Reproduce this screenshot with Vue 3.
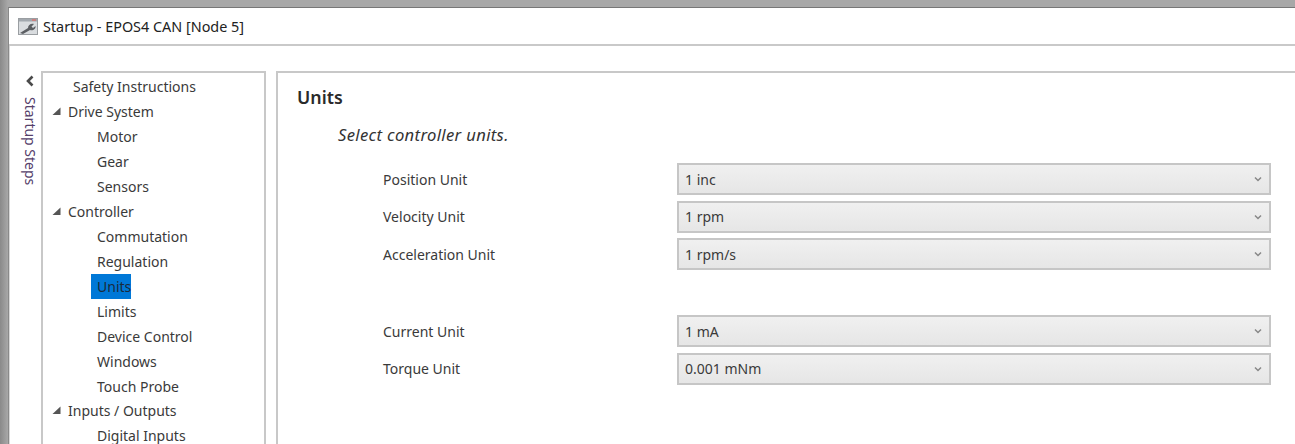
<script setup>
const tree = [
  { label: 'Safety Instructions', level: 0 },
  { label: 'Drive System', level: 1, open: true },
  { label: 'Motor', level: 2 },
  { label: 'Gear', level: 2 },
  { label: 'Sensors', level: 2 },
  { label: 'Controller', level: 1, open: true },
  { label: 'Commutation', level: 2 },
  { label: 'Regulation', level: 2 },
  { label: 'Units', level: 2, selected: true },
  { label: 'Limits', level: 2 },
  { label: 'Device Control', level: 2 },
  { label: 'Windows', level: 2 },
  { label: 'Touch Probe', level: 2 },
  { label: 'Inputs / Outputs', level: 1, open: true },
  { label: 'Digital Inputs', level: 2 },
]
const groupA = [
  { label: 'Position Unit', value: '1 inc' },
  { label: 'Velocity Unit', value: '1 rpm' },
  { label: 'Acceleration Unit', value: '1 rpm/s' },
]
const groupB = [
  { label: 'Current Unit', value: '1 mA' },
  { label: 'Torque Unit', value: '0.001 mNm' },
]
</script>

<template>
  <div class="screen">
    <div class="window">
      <header class="titlebar">
        <svg class="appicon" width="20" height="17" viewBox="0 0 20 17">
          <rect x="0.5" y="0.5" width="19" height="16" fill="#d9dcdf" stroke="#9a9ea2" />
          <rect x="1" y="1" width="18" height="2.5" fill="#a2a8ae" />
          <rect x="14" y="1" width="4" height="2" fill="#c98080" />
          <path d="M2 15 L10 10 C10 7 13 5 16 6 L13.5 8.5 L15 10 L17.5 8 C18 11 15 13 12 12 L5 16 Z" fill="#5b5e62" />
        </svg>
        <span class="title">Startup - EPOS4 CAN [Node 5]</span>
      </header>
      <div class="body">
        <aside class="rail">
          <svg class="chev" width="10" height="12" viewBox="0 0 10 12">
            <path d="M7.5 1.5 L3 6 L7.5 10.5" fill="none" stroke="#4a4a4a" stroke-width="2.6" />
          </svg>
          <div class="railtext">Startup Steps</div>
        </aside>
        <nav class="tree">
          <div v-for="n in tree" :key="n.label" class="node" :class="'lvl' + n.level">
            <svg v-if="n.open" class="arrow" width="9" height="9" viewBox="0 0 9 9">
              <path d="M8.5 0.5 V8 H0.5 Z" fill="#555" />
            </svg>
            <span class="nodetext" :class="{ selected: n.selected }">{{ n.label }}</span>
          </div>
        </nav>
        <main class="pane">
          <h1 class="heading">Units</h1>
          <p class="hint">Select controller units.</p>
          <div class="group">
            <div v-for="r in groupA" :key="r.label" class="row">
              <span class="rowlabel">{{ r.label }}</span>
              <div class="select">
                <span>{{ r.value }}</span>
                <svg width="8" height="6" viewBox="0 0 8 6"><path d="M1 1.5 L4 4.5 L7 1.5" fill="none" stroke="#888" stroke-width="1.5" /></svg>
              </div>
            </div>
          </div>
          <div class="group second">
            <div v-for="r in groupB" :key="r.label" class="row">
              <span class="rowlabel">{{ r.label }}</span>
              <div class="select">
                <span>{{ r.value }}</span>
                <svg width="8" height="6" viewBox="0 0 8 6"><path d="M1 1.5 L4 4.5 L7 1.5" fill="none" stroke="#888" stroke-width="1.5" /></svg>
              </div>
            </div>
          </div>
        </main>
      </div>
    </div>
  </div>
</template>

<style>
html, body { margin: 0; overflow: hidden; }
</style>

<style scoped>
.screen {
  width: 1295px;
  height: 444px;
  overflow: hidden;
  background: linear-gradient(90deg, #8a8a8a 0, #a8a8a8 8px);
  padding: 7px 0 0 8px;
  box-sizing: border-box;
  font-family: "Noto Sans", "Open Sans", sans-serif;
  font-size: 14px;
  color: #3a3a3a;
}
.window {
  height: 437px;
  background: #fff;
  border-top: 1px solid #777;
  border-left: 1px solid #8a8a8a;
  box-sizing: border-box;
  display: flex;
  flex-direction: column;
}
.titlebar {
  height: 36px;
  flex: none;
  display: flex;
  align-items: center;
  padding-left: 9px;
  gap: 5px;
  border-bottom: 2px solid #c9c9c9;
}
.title { color: #222; font-size: 14.4px; }
.appicon { flex: none; }
.body {
  flex: 1;
  min-height: 0;
  display: flex;
  padding: 25px 0 0 0;
  border-left: 1px solid #d8d8d8;
}
.rail {
  width: 31px;
  flex: none;
  display: flex;
  flex-direction: column;
  align-items: center;
  padding-top: 4px;
  box-sizing: border-box;
}
.chev { flex: none; margin-left: 9px; }
.railtext {
  writing-mode: vertical-rl;
  margin-top: 10px;
  margin-left: 10px;
  color: #55406a;
  font-size: 14px;
}
.tree {
  width: 225px;
  flex: none;
  box-sizing: border-box;
  border: 2px solid #c8c8c8;
  border-bottom: 0;
  padding-top: 2px;
}
.node {
  height: 24.93px;
  display: flex;
  align-items: center;
  position: relative;
}
.lvl0 { padding-left: 30px; }
.lvl1 { padding-left: 25px; }
.lvl2 { padding-left: 54px; }
.arrow { position: absolute; left: 9px; top: 7px; }
.nodetext { padding: 0 1px; line-height: 20px; margin-left: -1px; }
.nodetext.selected {
  background: #0078d7;
  padding: 2px 2px 0 6px;
  margin-left: -6px;
  height: 25px;
  line-height: 21px;
  box-sizing: border-box;
  width: 40px;
  color: #1a2a3a;
}
.pane {
  flex: 1;
  margin-left: 10px;
  border: 2px solid #c8c8c8;
  border-right: 0;
  border-bottom: 0;
  padding-left: 19px;
  min-width: 0;
}
.heading {
  margin: 12px 0 0;
  font-size: 17.8px;
  line-height: 24px;
  font-weight: 600;
  color: #2a2a2a;
}
.hint {
  margin: 14px 0 0 41px;
  font-style: italic;
  font-size: 16.6px;
  line-height: 24px;
  letter-spacing: 0.35px;
  color: #333;
}
.group {
  margin: 16px 0 0 86px;
  display: flex;
  flex-direction: column;
  gap: 5.5px;
}
.group.second { margin-top: 45px; }
.row {
  display: flex;
  align-items: center;
  height: 32px;
}
.rowlabel { width: 294px; flex: none; }
.select {
  width: 594px;
  height: 32px;
  box-sizing: border-box;
  border: 2px solid #c6c6c6;
  background: linear-gradient(#f0f0f0, #e6e6e6);
  display: flex;
  align-items: center;
  justify-content: space-between;
  padding: 0 7px 0 6px;
  flex: none;
}
</style>
